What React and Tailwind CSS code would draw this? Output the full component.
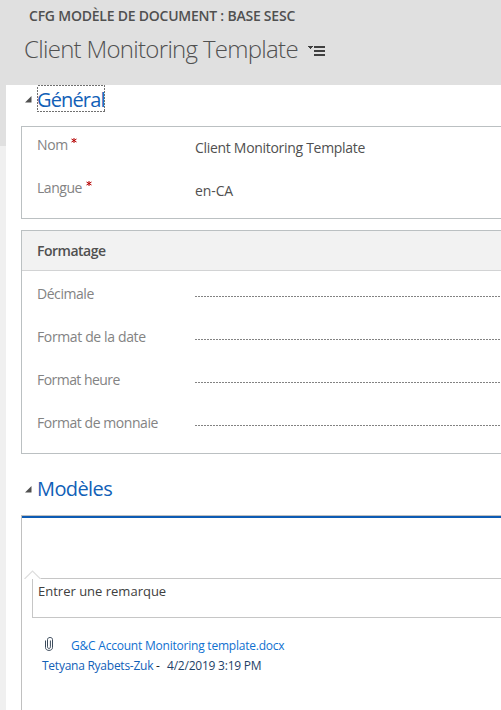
import React from "react";

function Triangle() {
  return (
    <svg width="7" height="7" viewBox="0 0 7 7" className="mt-[2px] shrink-0" fill="#505050">
      <path d="M6.5 0V6.5H0Z" />
    </svg>
  );
}

function Field({ label, labelClass, required, children }) {
  return (
    <div className="flex h-[43px] items-start text-[14px] leading-5">
      <div className="flex w-[158px] shrink-0 text-[#838383]">
        <span className={labelClass}>{label}</span>
        {required && (
          <svg width="7" height="7" viewBox="0 0 7 7" className="mt-[3px] ml-[3.5px]" stroke="#b50000" strokeWidth="1">
            <path d="M3 0V5M0.5 1L5.5 4M5.5 1L0.5 4" />
          </svg>
        )}
      </div>
      {children}
    </div>
  );
}

function EmptyValue() {
  return (
    <svg className="mt-[12px] h-px flex-1" shapeRendering="crispEdges">
      <line x1="0" y1="0.5" x2="310" y2="0.5" stroke="#838383" strokeDasharray="2 1" />
    </svg>
  );
}

export default function App() {
  return (
    <div className="flex h-[710px] w-[501px] flex-col overflow-hidden bg-white font-['Open_Sans','Noto_Sans',sans-serif] whitespace-nowrap text-[#505050]">
      <header className="h-[85px] shrink-0 bg-[#e0e0e0] pt-[6px]">
        <div className="pl-[29px] text-[14px] leading-5 font-semibold tracking-[-0.23px]">
          CFG MODÈLE DE DOCUMENT : BASE SESC
        </div>
        <div className="flex items-center pt-[6px] pl-6">
          <h1 className="w-[284px] text-[24px] leading-[34px] font-light tracking-[-0.7px]">Client Monitoring Template</h1>
          <svg width="18" height="12" viewBox="0 0 18 12" className="mt-[3px]" fill="#404040" shapeRendering="crispEdges">
            <path d="M0 1H5V2H4V3H3V4H2V3H1V2H0ZM6 1H17V3H6ZM6 5H17V7H6ZM6 9H17V11H6Z" />
          </svg>
        </div>
      </header>
      <div className="flex min-h-0 flex-1">
        <div className="w-[6px] shrink-0 bg-[#f0f0f0]">
          <div className="h-[61px] bg-[#e0e0e0]" />
        </div>
        <main className="flex min-w-0 flex-1 flex-col pl-[15px]">
          <div className="flex h-[27px] items-center gap-[5px] pl-[4px]">
            <Triangle />
            <div className="relative h-[27px] w-[68px]">
              <svg className="absolute inset-0 h-[27px] w-[68px]" shapeRendering="crispEdges">
                <rect x="0.5" y="0.5" width="67" height="26" fill="none" stroke="#707070" strokeDasharray="2 1" />
              </svg>
              <h2 className="text-[20px] leading-[30px] tracking-[-0.85px] text-[#1160b7]">Général</h2>
            </div>
          </div>

          <section className="mt-[14px] h-[93px] shrink-0 border border-r-0 border-[#bbc0c2] pt-[8px] pl-[15px]">
            <Field label="Nom" labelClass="tracking-[-0.4px]" required>
              <span className="mt-[3px] tracking-[-0.3px]">Client Monitoring Template</span>
            </Field>
            <Field label="Langue" labelClass="tracking-[-0.45px]" required>
              <span className="mt-[3px] tracking-[-0.1px]">en-CA</span>
            </Field>
          </section>

          <section className="mt-[11px] h-[224px] shrink-0 border border-r-0 border-[#bbc0c2]">
            <h3 className="h-10 border-b border-[#d2d3d4] bg-[#f2f2f2] pl-[15px] text-[14px] leading-10 font-semibold tracking-[-0.5px]">
              Formatage
            </h3>
            <div className="pt-[13px] pl-[15px]">
              <Field label="Décimale" labelClass="tracking-[-0.45px]"><EmptyValue /></Field>
              <Field label="Format de la date" labelClass="tracking-[-0.37px]"><EmptyValue /></Field>
              <Field label="Format heure" labelClass="tracking-[-0.55px]"><EmptyValue /></Field>
              <Field label="Format de monnaie" labelClass="tracking-[-0.45px]"><EmptyValue /></Field>
            </div>
          </section>

          <div className="mt-[20px] flex h-[29px] shrink-0 items-center gap-[5px] pl-[4px]">
            <Triangle />
            <h2 className="text-[20px] leading-[29px] tracking-[-0.6px] text-[#1160b7]">Modèles</h2>
          </div>

          <section className="mt-[12px] flex-1 border-t border-l border-[#c0c0c0]">
            <div className="h-[2px] bg-[#0d5bb3]" />
            <div className="relative mt-[60px] ml-[10px] h-[40px] border-t border-b border-l border-[#c6c6c6] pl-[5px] text-[13px] leading-[24px] text-[#404040]">
              <svg width="17" height="9" viewBox="0 0 17 9" className="absolute -top-[9px] -left-[9px]">
                <rect x="8" y="8" width="8.5" height="1" fill="#fff" />
                <path d="M0.5 9L8.5 1L16.5 9" fill="#fff" stroke="#dedede" strokeWidth="1.2" />
              </svg>
              Entrer une remarque
            </div>
            <div className="mt-[18px] flex h-5 items-center pl-[23px] text-[12px]">
              <svg width="8" height="14" viewBox="0 0 8 14" className="mb-[4px] shrink-0" fill="none" stroke="#3c4b5c" strokeWidth="1">
                <path d="M0.5 3.5V10.3C0.5 12.3 1.8 13.4 4 13.4S7.5 12.3 7.5 10.3V2.7C7.5 1.2 6.6 0.5 5.1 0.5S2.5 1.2 2.5 2.7V9.8C2.5 10.9 3 11.4 4 11.4S5.4 10.9 5.4 9.8V3.5" />
              </svg>
              <a className="ml-[18px] leading-5 tracking-[-0.22px] text-[#0f70d0]">G&amp;C Account Monitoring template.docx</a>
            </div>
            <div className="flex h-5 pl-[20px] text-[12px] leading-5">
              <span className="w-[114px] tracking-[-0.25px] text-[#1160b7]">Tetyana Ryabets-Zuk</span>
              <span className="w-[11px] text-[#202020]">-</span>
              <span className="tracking-[-0.22px] text-[#1f3f66]">4/2/2019 3:19 PM</span>
            </div>
          </section>
        </main>
      </div>
    </div>
  );
}
